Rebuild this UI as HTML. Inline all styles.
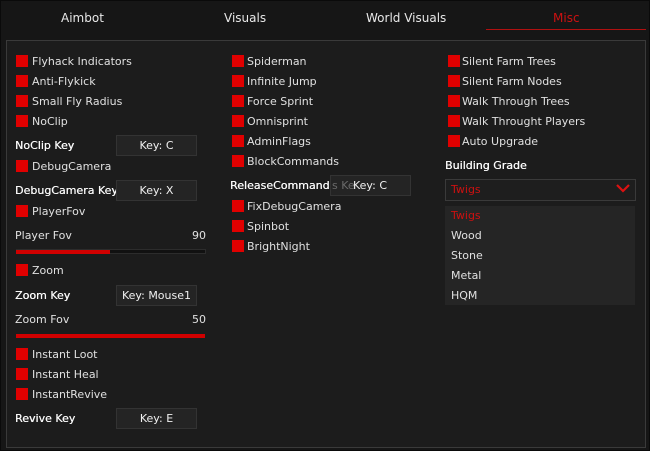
<!DOCTYPE html>
<html><head><style>
body{margin:0;width:650px;height:451px;background:#161616;overflow:hidden;font-family:"DejaVu Sans","Liberation Sans",sans-serif;font-size:11px;color:#e0e0e0;position:relative}
.a{position:absolute;white-space:nowrap}
.tab{position:absolute;top:11px;font-size:12px;color:#e8e8e8}
.panel{position:absolute;left:6px;top:40px;width:638px;height:406px;border:1px solid #3a3a3a;background:#1c1c1c}
.cb{position:absolute;width:12px;height:12px;background:#e00000}
.lb{position:absolute;white-space:nowrap;line-height:14px;margin-top:1px}
.b{color:#fafafa;font-size:11px;text-shadow:0.3px 0 0 #fafafa}
.key{position:absolute;width:79px;height:19px;background:#242424;border:1px solid #333;text-align:center;line-height:20px;color:#f0f0f0;z-index:2}
.tr{position:absolute;height:3px;background:#111;border:1px solid #2c2c2c}
.fill{position:absolute;height:4px;background:#d00000}
</style></head><body>
<div style="position:absolute;left:0;top:0;width:650px;height:451px;border:1px solid #0a0a0a;box-sizing:border-box"></div>
<div class="tab" style="left:61px">Aimbot</div>
<div class="tab" style="left:224px">Visuals</div>
<div class="tab" style="left:366px">World Visuals</div>
<div class="tab" style="left:553px;color:#cc1111">Misc</div>
<div class="a" style="left:486px;top:29px;width:160px;height:1px;background:#b01010"></div>
<div class="panel"></div>

<div class="cb" style="left:16px;top:55px"></div><div class="lb" style="left:32px;top:54px">Flyhack Indicators</div>
<div class="cb" style="left:16px;top:75px"></div><div class="lb" style="left:32px;top:74px">Anti-Flykick</div>
<div class="cb" style="left:16px;top:95px"></div><div class="lb" style="left:32px;top:94px">Small Fly Radius</div>
<div class="cb" style="left:16px;top:115px"></div><div class="lb" style="left:32px;top:114px">NoClip</div>
<div class="lb b" style="left:15px;top:138px">NoClip Key</div><div class="key" style="left:116px;top:135px">Key: C</div>
<div class="cb" style="left:16px;top:160px"></div><div class="lb" style="left:32px;top:159px">DebugCamera</div>
<div class="lb b" style="left:15px;top:183px">DebugCamera Key</div><div class="key" style="left:116px;top:180px">Key: X</div>
<div class="cb" style="left:16px;top:205px"></div><div class="lb" style="left:32px;top:204px">PlayerFov</div>
<div class="lb" style="left:15px;top:228px">Player Fov</div><div class="lb" style="left:192px;top:228px">90</div>
<div class="tr" style="left:16px;top:249px;width:188px"></div><div class="fill" style="left:16px;top:250px;width:94px"></div>
<div class="cb" style="left:16px;top:264px"></div><div class="lb" style="left:32px;top:263px">Zoom</div>
<div class="lb b" style="left:15px;top:288px">Zoom Key</div><div class="key" style="left:116px;top:285px">Key: Mouse1</div>
<div class="lb" style="left:15px;top:312px">Zoom Fov</div><div class="lb" style="left:192px;top:312px">50</div>
<div class="fill" style="left:16px;top:334px;width:189px"></div>
<div class="cb" style="left:16px;top:348px"></div><div class="lb" style="left:32px;top:347px">Instant Loot</div>
<div class="cb" style="left:16px;top:368px"></div><div class="lb" style="left:32px;top:367px">Instant Heal</div>
<div class="cb" style="left:16px;top:388px"></div><div class="lb" style="left:32px;top:387px">InstantRevive</div>
<div class="lb b" style="left:15px;top:411px">Revive Key</div><div class="key" style="left:116px;top:408px">Key: E</div>

<div class="cb" style="left:232px;top:55px"></div><div class="lb" style="left:247px;top:54px">Spiderman</div>
<div class="cb" style="left:232px;top:75px"></div><div class="lb" style="left:247px;top:74px">Infinite Jump</div>
<div class="cb" style="left:232px;top:95px"></div><div class="lb" style="left:247px;top:94px">Force Sprint</div>
<div class="cb" style="left:232px;top:115px"></div><div class="lb" style="left:247px;top:114px">Omnisprint</div>
<div class="cb" style="left:232px;top:135px"></div><div class="lb" style="left:247px;top:134px">AdminFlags</div>
<div class="cb" style="left:232px;top:155px"></div><div class="lb" style="left:247px;top:154px">BlockCommands</div>
<div class="lb b" style="left:230px;top:178px">ReleaseCommand</div>
<div class="key" style="left:330px;top:175px;overflow:hidden"><span style="color:#6a6a6a;position:absolute;left:1px;top:0">s Ke</span><span style="position:absolute;left:22px;top:0">Key: C</span></div>
<div class="cb" style="left:232px;top:200px"></div><div class="lb" style="left:247px;top:199px">FixDebugCamera</div>
<div class="cb" style="left:232px;top:220px"></div><div class="lb" style="left:247px;top:219px">Spinbot</div>
<div class="cb" style="left:232px;top:240px"></div><div class="lb" style="left:247px;top:239px">BrightNight</div>

<div class="cb" style="left:448px;top:55px"></div><div class="lb" style="left:462px;top:54px">Silent Farm Trees</div>
<div class="cb" style="left:448px;top:75px"></div><div class="lb" style="left:462px;top:74px">Silent Farm Nodes</div>
<div class="cb" style="left:448px;top:95px"></div><div class="lb" style="left:462px;top:94px">Walk Through Trees</div>
<div class="cb" style="left:448px;top:115px"></div><div class="lb" style="left:462px;top:114px">Walk Throught Players</div>
<div class="cb" style="left:448px;top:135px"></div><div class="lb" style="left:462px;top:134px">Auto Upgrade</div>
<div class="lb b" style="left:445px;top:158px">Building Grade</div>
<div class="a" style="left:445px;top:179px;width:189px;height:20px;background:#1e1e1e;border:1px solid #3a3a3a"></div>
<div class="lb" style="left:451px;top:182px;color:#cc1111">Twigs</div>
<svg class="a" style="left:616px;top:184px" width="14" height="9"><path d="M1 1 L7 7 L13 1" stroke="#dd1111" stroke-width="2.2" fill="none"/></svg>
<div class="a" style="left:445px;top:206px;width:190px;height:99px;background:#252525"></div>
<div class="lb" style="left:451px;top:208px;color:#cc1111">Twigs</div>
<div class="lb" style="left:451px;top:228px">Wood</div>
<div class="lb" style="left:451px;top:248px">Stone</div>
<div class="lb" style="left:451px;top:268px">Metal</div>
<div class="lb" style="left:451px;top:288px">HQM</div>
</body></html>
